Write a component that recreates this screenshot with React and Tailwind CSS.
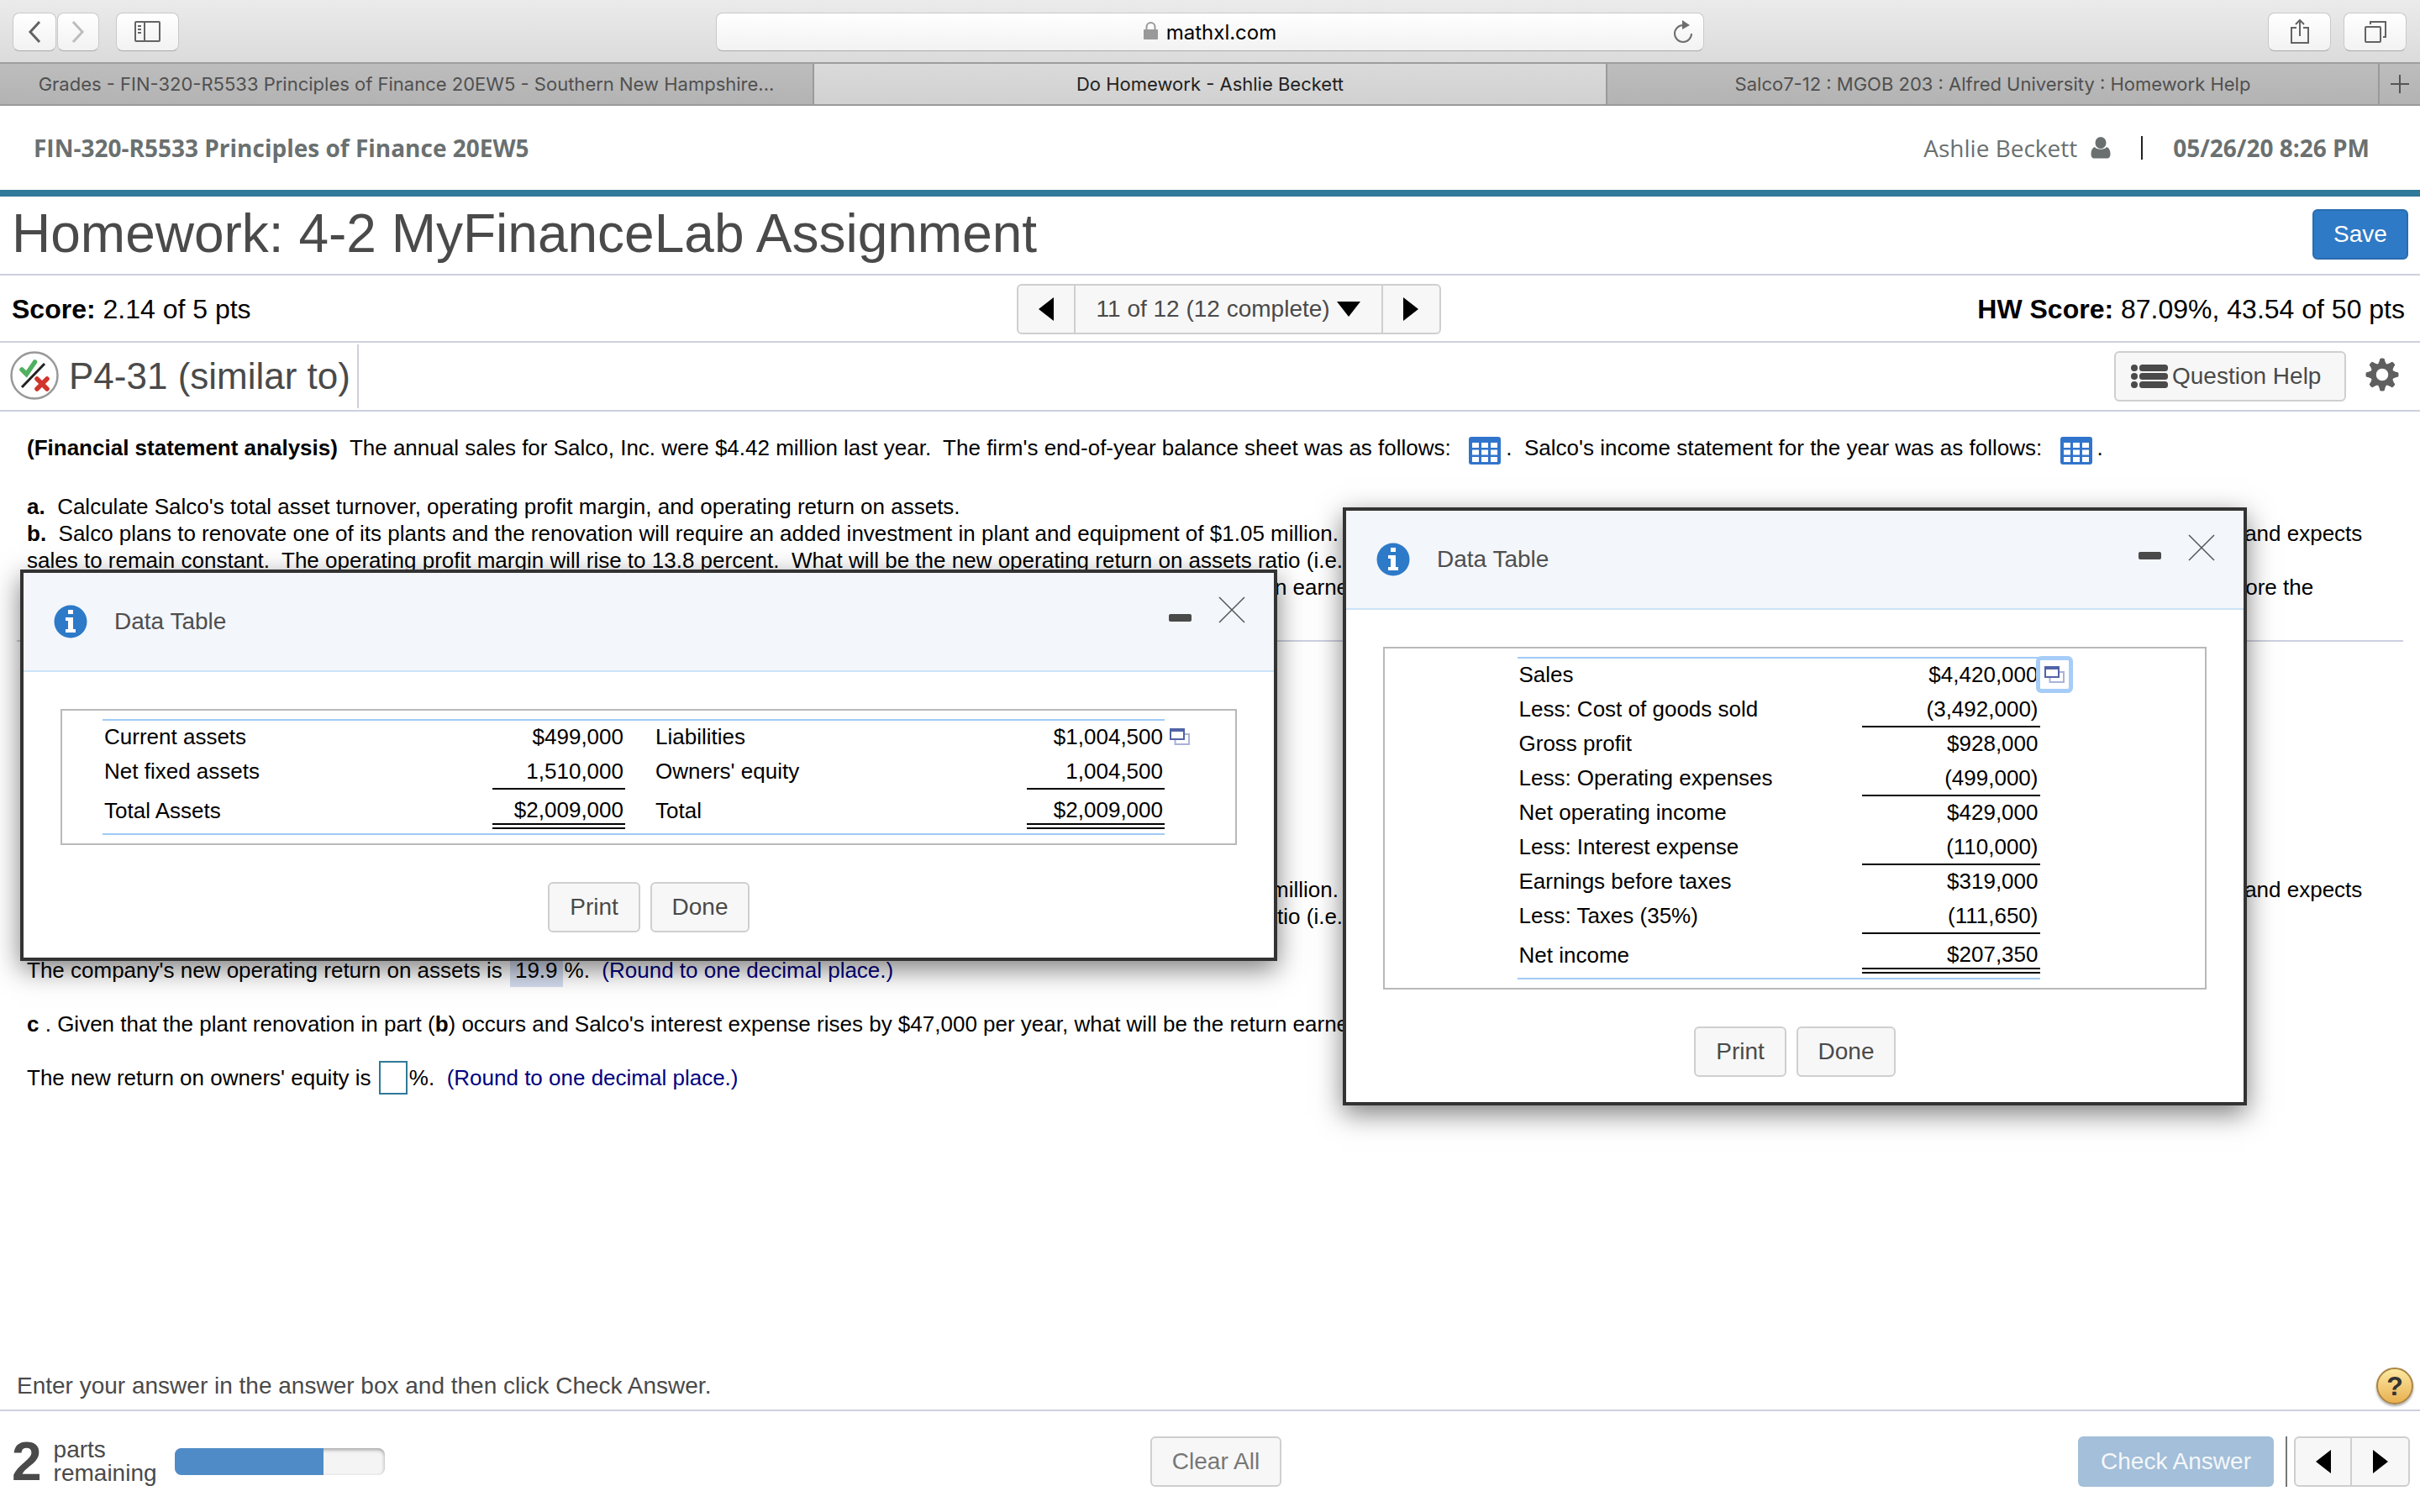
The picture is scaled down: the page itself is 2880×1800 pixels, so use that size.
import React from "react";

const SANS = "font-['Liberation_Sans',Arial,sans-serif]";

const chromeButton =
  "flex h-[46px] items-center justify-center rounded-lg border border-[#c9c9c9] border-b-[#a9a9a9] bg-linear-to-b from-white to-[#f2f2f2] text-[#636363]";

const greyButton =
  "h-[60px] rounded-md border-2 border-[#cfcfcf] bg-[#f7f7f7] text-[28px] leading-8 text-[#4a4a4a]";

function Triangle({ direction }) {
  const points = {
    left: "18,0 18,28 0,14",
    right: "0,0 18,14 0,28",
    down: "0,0 28,0 14,18",
  }[direction];
  const box = direction === "down" ? [28, 18] : [18, 28];
  return (
    <svg width={box[0]} height={box[1]} viewBox={`0 0 ${box[0]} ${box[1]}`} aria-hidden="true">
      <polygon points={points} fill="#000" />
    </svg>
  );
}

function BrowserToolbar() {
  return (
    <div className="grid h-[76px] grid-cols-[1fr_1176px_1fr] items-center border-b-2 border-[#9e9e9e] bg-linear-to-b from-[#ebebeb] to-[#dbdbdb] pt-0.5">
      <div className="flex items-center pl-[15px]">
        <button aria-label="Back" className={`${chromeButton} w-[52px]`}>
          <svg width="16" height="26" viewBox="0 0 16 26" fill="none" stroke="currentColor" strokeWidth="3">
            <path d="M14 1 3 13l11 12" />
          </svg>
        </button>
        <button aria-label="Forward" className={`${chromeButton} ml-px w-[50px]`}>
          <svg width="16" height="26" viewBox="0 0 16 26" fill="none" stroke="#bdbdbd" strokeWidth="3">
            <path d="M2 1l11 12L2 25" />
          </svg>
        </button>
        <button aria-label="Show sidebar" className={`${chromeButton} ml-5 w-[75px]`}>
          <svg width="32" height="26" viewBox="0 0 32 26" fill="none" stroke="currentColor" strokeWidth="2">
            <rect x="1" y="1" width="29" height="23" rx="1" />
            <path d="M12 1v23M4 6h4M4 10h4M4 14h4" />
          </svg>
        </button>
      </div>
      <div className="grid h-[46px] grid-cols-[1fr_auto_1fr] items-center rounded-lg border border-[#c9c9c9] border-b-[#a9a9a9] bg-linear-to-b from-white to-[#f2f2f2]">
        <span />
        <a href="#" className="flex items-center gap-2.5 pt-0.5 font-[Inter,sans-serif] text-[24px] leading-8 text-black">
          <svg className="mb-1" width="17" height="22" viewBox="0 0 17 22" aria-hidden="true">
            <rect x="0" y="9" width="17" height="12" rx="1" fill="#999" />
            <path d="M3.500 10V6a5 5 0 0 1 10 0v4" fill="none" stroke="#999" strokeWidth="2" />
          </svg>
          mathxl.com
        </a>
        <button aria-label="Reload" className="mr-3 justify-self-end text-[#6d6d6d]">
          <svg width="24" height="28" viewBox="0 0 24 28" fill="none" stroke="currentColor" strokeWidth="2">
            <path d="M12 6a10 10 0 1 0 10 10" />
            <path d="M11 0l9 6-9 5z" fill="currentColor" stroke="none" />
          </svg>
        </button>
      </div>
      <div className="flex items-center justify-end gap-[15px] pr-4">
        <button aria-label="Share" className={`${chromeButton} w-[75px]`}>
          <svg width="24" height="32" viewBox="0 0 24 32" fill="none" stroke="currentColor" strokeWidth="2">
            <path d="M8 11H2v18h20V11h-6M12 21V2M7 7l5-5 5 5" />
          </svg>
        </button>
        <button aria-label="Show all tabs" className={`${chromeButton} w-[75px]`}>
          <svg width="26" height="28" viewBox="0 0 26 28" fill="none" stroke="currentColor" strokeWidth="2">
            <rect x="1" y="8" width="18" height="18" rx="1" />
            <path d="M7 5V2h18v18h-3" />
          </svg>
        </button>
      </div>
    </div>
  );
}

function BrowserTabs() {
  const idle = "truncate border-r-2 border-[#9a9a9a] bg-linear-to-b from-[#bdbdbd] to-[#b3b3b3] px-3 text-[#505050]";
  return (
    <nav className="grid h-[50px] grid-cols-[969fr_944fr_919fr_48px] border-b-2 border-[#9a9a9a] text-center font-[Inter,sans-serif] text-[22px] leading-[48px]">
      <a href="#" className={idle}>
        Grades - FIN-320-R5533 Principles of Finance 20EW5 - Southern New Hampshire...
      </a>
      <a href="#" className="truncate border-r-2 border-[#9a9a9a] bg-linear-to-b from-[#dadada] to-[#d1d1d1] text-[#222]">
        Do Homework - Ashlie Beckett
      </a>
      <a href="#" className={idle}>
        Salco7-12 : MGOB 203 : Alfred University : Homework Help
      </a>
      <button aria-label="New tab" className="flex items-center justify-center bg-linear-to-b from-[#bdbdbd] to-[#b3b3b3] text-[#555]">
        <svg width="22" height="22" viewBox="0 0 22 22" stroke="currentColor" strokeWidth="2">
          <path d="M11 0v22M0 11h22" />
        </svg>
      </button>
    </nav>
  );
}

function CourseHeader() {
  return (
    <header className="flex h-[108px] items-center justify-between border-b-8 border-[#2f7999] pr-[60px] pb-px pl-10 font-['Open_Sans',sans-serif] text-[28px] leading-9 text-[#6a7070]">
      <b>FIN-320-R5533 Principles of Finance 20EW5</b>
      <div className="flex items-center">
        <span>Ashlie Beckett</span>
        <svg className="ml-4" width="24" height="26" viewBox="0 0 24 26" fill="#6a7070" aria-hidden="true">
          <ellipse cx="12" cy="7" rx="6.500" ry="7" />
          <path d="M5 12c2 3.500 12 3.500 14 0 3 1 4.500 4 4.500 8 0 4-1.500 5.500-4 5.500h-15C2 25.500.5 24 .5 20c0-4 1.500-7 4.500-8z" />
        </svg>
        <span className="mr-9 ml-9 h-7 w-0.5 bg-[#222]" />
        <b>05/26/20 8:26 PM</b>
      </div>
    </header>
  );
}

function QuestionPager() {
  return (
    <div className="flex h-[60px] rounded-md border-2 border-[#cfcfcf] bg-[#f7f7f7]">
      <button aria-label="Previous question" className="flex w-[68px] items-center justify-center border-r-2 border-[#cfcfcf]">
        <Triangle direction="left" />
      </button>
      <button className="flex w-[366px] items-center justify-center gap-2 border-r-2 border-[#cfcfcf] text-[28px] leading-8 whitespace-nowrap text-[#4a4a4a]">
        11 of 12 (12 complete) <Triangle direction="down" />
      </button>
      <button aria-label="Next question" className="flex w-[67px] items-center justify-center">
        <Triangle direction="right" />
      </button>
    </div>
  );
}

function PartialCreditIcon() {
  return (
    <svg width="58" height="60" viewBox="0 0 58 60" fill="none" role="img" aria-label="Partially correct">
      <circle cx="29" cy="29" r="27.500" stroke="#999" strokeWidth="2.500" fill="#fff" />
      <path d="M14 22l5.500 5.500L29.500 13" stroke="#4fb060" strokeWidth="5.500" strokeLinecap="round" />
      <path d="M14 43L41 15" stroke="#222" strokeWidth="3" />
      <path d="M32 33l12 12M44 33L32 45" stroke="#d0342c" strokeWidth="5.500" strokeLinecap="round" />
    </svg>
  );
}

function GearIcon() {
  const teeth = [0, 45, 90, 135, 180, 225, 270, 315];
  return (
    <svg width="40" height="40" viewBox="0 0 40 40" aria-hidden="true">
      <g fill="#5f5f5f">
        {teeth.map((angle) => (
          <path key={angle} d="M15 8L17 3V2a2 2 0 0 1 2-1.500h2A2 2 0 0 1 23 2v1L25 8z" transform={`rotate(${angle} 20 20)`} />
        ))}
      </g>
      <circle cx="20" cy="20" r="10.500" fill="none" stroke="#5f5f5f" strokeWidth="6.500" />
    </svg>
  );
}

function ListIcon() {
  return (
    <svg className="shrink-0" width="45" height="30" viewBox="0 0 45 30" fill="#4a4a4a" aria-hidden="true">
      {[1, 11, 21].map((y) => (
        <g key={y}>
          <circle cx="4" cy={y + 4} r="4" />
          <rect x="10" y={y} width="34" height="8" rx="3.500" />
        </g>
      ))}
    </svg>
  );
}

function GridIcon({ label }) {
  return (
    <button aria-label={label} className="mr-1.5 ml-[7px] inline-block h-9 pt-[3px] align-top">
      <svg width="38" height="33" viewBox="0 0 38 33">
        <rect x="0" y="0" width="38" height="33" rx="3" fill="#3174cb" />
        {[7, 15.500, 24].map((y) =>
          [4, 15, 26].map((x) => <rect key={`${x}-${y}`} x={x} y={y} width="8" height="6" fill="#fff" />)
        )}
      </svg>
    </button>
  );
}

function CopyIcon({ focused }) {
  return (
    <button
      aria-label="Open table in spreadsheet"
      className={
        focused
          ? "-mt-px -ml-[5px] flex h-11 w-11 items-center justify-center rounded-md border-[5px] border-[#a6cdf8] bg-white"
          : "mt-[11px] ml-1.5 flex h-5 w-6 items-center justify-center"
      }
    >
      <svg className="shrink-0" width="24" height="20" viewBox="0 0 24 20" fill="#fff">
        <rect x="6.500" y="7" width="16.500" height="12" stroke="#aab2d9" strokeWidth="2" />
        <rect x="1" y="1" width="16" height="12" stroke="#5263a6" strokeWidth="2" />
        <rect x="0" y="0" width="18" height="4" fill="#5263a6" />
      </svg>
    </button>
  );
}

function DataDialog({ label, className, children }) {
  return (
    <section
      role="dialog"
      aria-label={label}
      className={`absolute border-4 border-[#333] bg-white shadow-[0_10px_30px_rgba(0,0,0,0.5)] ${className}`}
    >
      <header className="flex h-[118px] items-center border-b-2 border-[#cbe3f7] bg-[#f3f6fb] pr-[34px] pl-9 text-[#4f4f4f]">
        <svg width="40" height="40" viewBox="0 0 40 40" aria-hidden="true">
          <circle cx="20" cy="20" r="19.500" fill="#2d7ac8" />
          <path fill="#fff" d="M17 6h6v5h-6zM14 15h9v14h3v4H14v-4h3V19h-3z" />
        </svg>
        <h2 className="ml-8 text-[28px] leading-8">Data Table</h2>
        <button aria-label="Minimize" className="mr-8 mb-6 ml-auto flex h-8 items-end">
          <span className="mb-1 block h-[9px] w-[27px] rounded-xs bg-[#4a4a4a]" />
        </button>
        <button aria-label="Close" className="mb-7">
          <svg width="32" height="32" viewBox="0 0 32 32" stroke="#555" strokeWidth="1.500">
            <path d="M1 1l30 30M31 1L1 31" />
          </svg>
        </button>
      </header>
      <div className="px-11 pt-11">{children}</div>
      <div className="flex justify-center gap-3 pt-11 pb-[30px]">
        <button className={`${greyButton} w-[110px]`}>Print</button>
        <button className={`${greyButton} w-[118px]`}>Done</button>
      </div>
    </section>
  );
}

function Total({ children }) {
  return (
    <td className="pt-[9px] pb-[5px] text-right">
      <div className="pr-0.5 leading-[31px]">{children}</div>
      <div className="h-[7px] border-y-2 border-black" />
    </td>
  );
}

function Amount({ children, ruled }) {
  return (
    <td className={`pt-[3px] pr-0.5 text-right align-top ${ruled ? "border-b-2 border-black" : ""}`}>{children}</td>
  );
}

function BalanceSheet() {
  return (
    <div className="flex border-2 border-[#b9b9b9] py-2.5 pr-[54px] pl-12 text-[26px] leading-8">
      <table className="flex-1 table-fixed border-separate border-spacing-0 border-y-2 border-[#a0cbf7] text-left">
        <colgroup>
          <col className="w-[464px]" />
          <col className="w-[158px]" />
          <col className="w-[478px]" />
          <col className="w-[164px]" />
        </colgroup>
        <tbody>
          <tr className="h-[41px]">
            <td className="pt-[3px] pl-0.5 align-top">Current assets</td>
            <Amount>$499,000</Amount>
            <td className="pt-[3px] pl-9 align-top">Liabilities</td>
            <Amount>$1,004,500</Amount>
          </tr>
          <tr className="h-[41px]">
            <td className="pt-[3px] pl-0.5 align-top">Net fixed assets</td>
            <Amount ruled>1,510,000</Amount>
            <td className="pt-[3px] pl-9 align-top">Owners' equity</td>
            <Amount ruled>1,004,500</Amount>
          </tr>
          <tr>
            <td className="pt-[9px] pl-0.5 align-top">Total Assets</td>
            <Total>$2,009,000</Total>
            <td className="pt-[9px] pl-9 align-top">Total</td>
            <Total>$2,009,000</Total>
          </tr>
        </tbody>
      </table>
      <CopyIcon />
    </div>
  );
}

const incomeRows = [
  ["Sales", "$4,420,000", false],
  ["Less: Cost of goods sold", "(3,492,000)", true],
  ["Gross profit", "$928,000", false],
  ["Less: Operating expenses", "(499,000)", true],
  ["Net operating income", "$429,000", false],
  ["Less: Interest expense", "(110,000)", true],
  ["Earnings before taxes", "$319,000", false],
  ["Less: Taxes (35%)", "(111,650)", true],
];

function IncomeStatement() {
  return (
    <div className="flex justify-center border-2 border-[#b9b9b9] py-2.5 text-[26px] leading-8">
      <table className="w-[622px] table-fixed border-separate border-spacing-0 border-y-2 border-[#a0cbf7] text-left">
        <colgroup>
          <col />
          <col className="w-[212px]" />
        </colgroup>
        <tbody>
          {incomeRows.map(([name, value, ruled]) => (
            <tr key={name} className="h-[41px]">
              <td className="pt-[3px] pl-0.5 align-top">{name}</td>
              <Amount ruled={ruled}>{value}</Amount>
            </tr>
          ))}
          <tr>
            <td className="pt-[9px] pl-0.5 align-top">Net income</td>
            <Total>$207,350</Total>
          </tr>
        </tbody>
      </table>
      <CopyIcon focused />
    </div>
  );
}

function Hint() {
  return <span className="text-[#00007f]">(Round to one decimal place.)</span>;
}

function PartB() {
  return (
    <>
      <p>
        <b>b.</b>
        {"  Salco plans to renovate one of its plants and the renovation will require an added investment in plant and equipment of $1.05 million.  Salco will maintain its present debt ratio of 50 percent when financing this added investment and expects"}
      </p>
      <p>
        {"sales to remain constant.  The operating profit margin will rise to 13.8 percent.  What will be the new operating return on assets ratio (i.e., net operating income ÷ total assets) for Salco after the plant's renovation?"}
      </p>
    </>
  );
}

function Question() {
  return (
    <main className="relative flex-1 pt-[27px] text-[26px] leading-8 whitespace-pre text-black">
      <div className="pl-8">
        <p className="mb-[38px] h-8">
          <b>(Financial statement analysis)</b>
          {"  The annual sales for Salco, Inc. were $4.42 million last year.  The firm's end-of-year balance sheet was as follows:  "}
          <GridIcon label="Balance sheet" />
          {".  Salco's income statement for the year was as follows:  "}
          <GridIcon label="Income statement" />.
        </p>
        <p>
          <b>a.</b>
          {"  Calculate Salco's total asset turnover, operating profit margin, and operating return on assets."}
        </p>
        <PartB />
        <p>
          <b>c.</b>
          {"  Given that the plant renovation in part ("}
          <b>b</b>
          {") occurs and Salco's interest expense rises by $47,000 per year, what will be the return earned on the common stockholders' investment?  Compare this rate of return with that earned before the"}
        </p>
        <p>renovation.</p>
      </div>
      <hr className="mx-5 mt-[15px] border-t-2 border-[#cdd0de]" />
      <div className="pt-[279px] pl-8">
        <PartB />
        <p className="mt-8 flex h-8">
          {"The company's new operating return on assets is "}
          <span className="ml-0.5 h-9 bg-[#d3dcee] px-1.5">19.9</span>
          <span className="ml-0.5">
            {"%.  "}
            <Hint />
          </span>
        </p>
        <p className="mt-8">
          <b>c</b>
          {" . Given that the plant renovation in part ("}
          <b>b</b>
          {") occurs and Salco's interest expense rises by $47,000 per year, what will be the return earned on the owners' equity?"}
        </p>
        <div className="mt-8 flex h-8 items-center">
          <label htmlFor="equity-return">{"The new return on owners' equity is "}</label>
          <input id="equity-return" type="text" className="mr-0.5 ml-0.5 h-10 w-[34px] border-2 border-[#2f7999] bg-white" />
          <span>
            {"%.  "}
            <Hint />
          </span>
        </div>
      </div>

      <DataDialog label="Balance sheet" className="top-[188px] left-6 w-[1496px]">
        <BalanceSheet />
      </DataDialog>
      <DataDialog label="Income statement" className="top-[114px] left-[1598px] w-[1076px]">
        <IncomeStatement />
      </DataDialog>
    </main>
  );
}

function Footer() {
  return (
    <footer>
      <div className="flex items-center justify-between border-b-2 border-[#cdd0de] pr-2 pb-1.5 pl-5 text-[28px] leading-8 text-[#4a4a4a]">
        <p>Enter your answer in the answer box and then click Check Answer.</p>
        <button
          aria-label="Help"
          className="h-11 w-11 rounded-full border-2 border-[#a98442] bg-linear-to-b from-[#fbe9a0] to-[#e9b04f] text-[32px] leading-10 font-bold text-[#333] shadow-[0_2px_3px_rgba(0,0,0,0.35)]"
        >
          ?
        </button>
      </div>
      <div className="grid h-[120px] grid-cols-[1fr_auto_1fr] items-center pl-3.5 text-[28px] text-[#4a4a4a]">
        <div className="flex items-center">
          <b className="text-[64px] leading-[60px]">2</b>
          <span className="ml-3.5 w-36 text-[28px] leading-7">
            parts
            <br />
            remaining
          </span>
          <div
            role="progressbar"
            aria-label="Progress"
            aria-valuenow={71}
            className="h-8 w-[250px] overflow-hidden rounded-lg bg-[#f4f4f4] shadow-[inset_0_2px_4px_rgba(0,0,0,0.35)]"
          >
            <div className="h-8 w-[71%] bg-[#4f8bc6]" />
          </div>
        </div>
        <button className={`${greyButton} w-[156px] text-[#777]`}>Clear All</button>
        <div className="flex items-center justify-end pr-3">
          <button className="h-[60px] w-[233px] rounded-md bg-[#a3bfd9] text-[28px] leading-8 text-[#f5f7fa]">
            Check Answer
          </button>
          <span className="mr-2 ml-3.5 h-[60px] w-0.5 bg-[#777]" />
          <div className="flex h-[60px] rounded-md border-2 border-[#cfcfcf] bg-[#f7f7f7]">
            <button aria-label="Previous part" className="flex w-[67px] items-center justify-center border-r-2 border-[#cfcfcf]">
              <Triangle direction="left" />
            </button>
            <button aria-label="Next part" className="flex w-[67px] items-center justify-center">
              <Triangle direction="right" />
            </button>
          </div>
        </div>
      </div>
    </footer>
  );
}

export default function App() {
  return (
    <div className={`flex min-h-screen flex-col overflow-hidden bg-white ${SANS}`}>
      <BrowserToolbar />
      <BrowserTabs />
      <CourseHeader />
      <div className="flex h-[94px] items-center justify-between border-b-2 border-[#cdd0de] pr-3.5 pl-3.5">
        <h1 className="pb-1 text-[64px] leading-[72px] text-[#4a4a4a]">Homework: 4-2 MyFinanceLab Assignment</h1>
        <button className="mb-0.5 h-[60px] w-[114px] rounded-md border-2 border-[#2a6cb0] bg-[#2f7ac6] text-[28px] leading-8 text-white">
          Save
        </button>
      </div>
      <div className="grid h-20 grid-cols-[42%_auto_1fr] items-center border-b-2 border-[#cdd0de] pt-0.5 text-[32px] leading-9 text-black">
        <p className="pl-3.5">
          <b>Score:</b> 2.14 of 5 pts
        </p>
        <QuestionPager />
        <p className="pr-[18px] text-right">
          <b>HW Score:</b> 87.09%, 43.54 of 50 pts
        </p>
      </div>
      <div className="flex h-[82px] items-center border-b-2 border-[#cdd0de] text-[#4a4a4a]">
        <div className="flex h-[76px] items-center gap-3 border-r-2 border-[#cdd0de] pr-2 pl-3">
          <PartialCreditIcon />
          <h2 className="text-[44px] leading-[52px]">P4-31 (similar to)</h2>
        </div>
        <button className={`${greyButton} ml-auto flex w-[276px] items-center gap-1 pl-[18px] whitespace-nowrap`}>
          <ListIcon /> Question Help
        </button>
        <button aria-label="Settings" className="mr-[25px] mb-1 ml-[23px]">
          <GearIcon />
        </button>
      </div>
      <Question />
      <Footer />
    </div>
  );
}
